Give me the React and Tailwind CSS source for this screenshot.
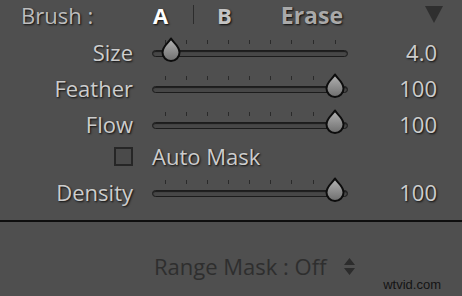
import React from 'react'

// Tick marks sit above the track at fixed offsets from the slider's left edge.
const TICKS = [13, 34, 55, 76, 97, 118, 139, 161, 183]

const SLIDERS = [
  { label: 'Size', value: '4.0', pos: 19 },
  { label: 'Feather', value: '100', pos: 183 },
  { label: 'Flow', value: '100', pos: 183 },
]

const shadow = '[text-shadow:1px_1px_2px_rgba(0,0,0,0.85)]'

function Thumb({ x }) {
  return (
    <svg
      width="22"
      height="25"
      viewBox="0 0 22 25"
      className="absolute top-[-13px]"
      style={{ left: x - 11 }}
    >
      <defs>
        <linearGradient id="thumbFill" x1="0" y1="0" x2="0" y2="1">
          <stop offset="0" stopColor="#b4b4b4" />
          <stop offset="1" stopColor="#6e6e6e" />
        </linearGradient>
      </defs>
      <path
        d="M11 1.5 C13 5.5 19.5 9 19.5 15.5 A8.5 8.5 0 0 1 2.5 15.5 C2.5 9 9 5.5 11 1.5 Z"
        fill="url(#thumbFill)"
        stroke="#0d0d0d"
        strokeWidth="2"
        strokeLinejoin="round"
      />
    </svg>
  )
}

function Track({ pos }) {
  return (
    <div className="relative w-[196px] h-[7px]">
      {TICKS.map((t) => (
        <span key={t} className="absolute top-[-10px] w-px h-[4px] bg-[#2a2a2a]" style={{ left: t }} />
      ))}
      <div className="h-[7px] rounded-full border border-[#1c1c1c] bg-[#474747] shadow-[inset_0_1px_1px_rgba(0,0,0,0.6)]" />
      <Thumb x={pos} />
    </div>
  )
}

function SliderRow({ label, value, pos, className = '' }) {
  return (
    <div className={`flex items-center h-[36px] ${className}`}>
      <div className={`w-[133px] text-right ${shadow}`}>{label}</div>
      <div className="ml-[19px] pt-[2px]">
        <Track pos={pos} />
      </div>
      <div className={`flex-1 text-right pr-[25px] ${shadow}`}>{value}</div>
    </div>
  )
}

export default function App() {
  return (
    <div className="w-[462px] h-[296px] overflow-hidden bg-[#4f4f4f] text-[#cdcdcd] text-[22px] leading-[28px] font-['Open_Sans',sans-serif]">
      <div className="flex items-center h-[29px]">
        <div className={`w-[153px] pl-[21px] text-[#bdbdbd] ${shadow}`}>Brush :</div>
        <div className={`w-[40px] font-bold text-white ${shadow}`}>A</div>
        <span className="w-px h-[19px] bg-[#2c2c2c]" />
        <div className={`ml-[23px] font-bold text-[#c4c4c4] ${shadow}`}>B</div>
        <div className={`ml-[49px] font-bold text-[23px] text-[#a9a9a9] ${shadow}`}>Erase</div>
        <svg width="18" height="17" viewBox="0 0 18 17" className="ml-auto mr-[19px]">
          <path d="M0 0 H18 L9 17 Z" fill="#2f2f2f" />
        </svg>
      </div>

      <div className="mt-[5px]">
        {SLIDERS.map((s) => (
          <SliderRow key={s.label} {...s} />
        ))}
        <div className="flex items-center h-[28px]">
          <div className="w-[133px] flex justify-end">
            <span className="w-[19px] h-[19px] border-2 border-[#262626] bg-[#4a4a4a]" />
          </div>
          <div className={`ml-[19px] ${shadow}`}>Auto Mask</div>
        </div>
        <SliderRow label="Density" value="100" pos={183} className="mt-[4px]" />
      </div>

      <div className="mt-[10px] h-[2px] bg-[#0e0e0e]" />

      <div className="relative h-[73px]">
        <div className="flex items-center pt-[30px] pl-[154px] text-[#2e2e2e]">
          <span>Range Mask : Off</span>
          <svg width="11" height="17" viewBox="0 0 11 17" className="ml-[17px]">
            <path d="M5.5 0 L11 7 H0 Z M0 10 H11 L5.5 17 Z" fill="#2c2c2c" />
          </svg>
        </div>
        <div className="absolute right-[21px] bottom-[4px] text-[13px] leading-none text-[#141414] font-['Liberation_Sans',sans-serif]">
          wtvid.com
        </div>
      </div>
    </div>
  )
}
